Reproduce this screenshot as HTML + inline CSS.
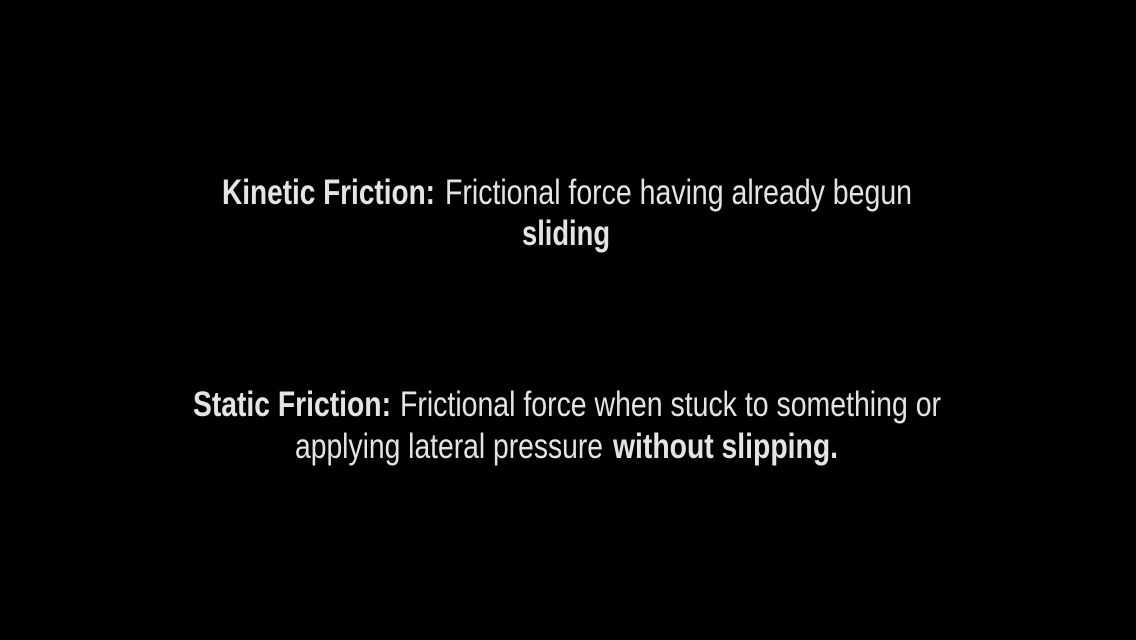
<!DOCTYPE html>
<html><head><meta charset="utf-8"><style>
html,body{margin:0;padding:0;background:#000;width:1136px;height:640px;overflow:hidden}
svg{display:block}
text{font-family:"Liberation Sans",sans-serif;font-size:35px;fill:#e4e4e4}
.b{font-weight:bold}
</style></head><body>
<svg width="1136" height="640" viewBox="0 0 1136 640">
<rect width="1136" height="640" fill="#000"/>
<text class="b" x="222" y="204" textLength="213" lengthAdjust="spacingAndGlyphs">Kinetic Friction:</text>
<text x="445" y="204" textLength="467" lengthAdjust="spacingAndGlyphs">Frictional force having already begun</text>
<text class="b" x="522" y="245" textLength="88" lengthAdjust="spacingAndGlyphs">sliding</text>
<text class="b" x="193" y="416" textLength="198" lengthAdjust="spacingAndGlyphs">Static Friction:</text>
<text x="400" y="416" textLength="541" lengthAdjust="spacingAndGlyphs">Frictional force when stuck to something or</text>
<text x="295" y="458" textLength="308" lengthAdjust="spacingAndGlyphs">applying lateral pressure</text>
<text class="b" x="613" y="458" textLength="225" lengthAdjust="spacingAndGlyphs">without slipping.</text>
</svg>
</body></html>
